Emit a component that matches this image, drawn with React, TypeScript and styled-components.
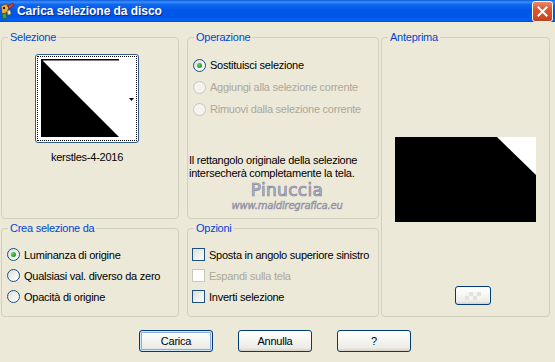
import React from 'react';
import styled, { createGlobalStyle } from 'styled-components';

const GlobalStyle = createGlobalStyle`
  html, body {
    margin: 0;
    padding: 0;
    background: #ECE9D8;
  }
  body {
    font-family: 'Liberation Sans', Tahoma, Arial, sans-serif;
    font-size: 11px;
    letter-spacing: -0.25px;
    color: #000;
  }
`;

const Window = styled.div`
  width: 555px;
  height: 362px;
  display: flex;
  flex-direction: column;
  background: #ECE9D8;
  overflow: hidden;
`;

const TitleBar = styled.div`
  height: 22px;
  display: flex;
  align-items: center;
  padding: 0 2px 0 0;
  background: linear-gradient(180deg, #0A5CDF 0%, #3D8FF7 9%, #1068F0 20%, #0058E8 45%, #0056E6 75%, #0062F6 90%, #004CD8 100%);
`;

const TitleText = styled.span`
  flex: 1;
  margin-left: 1px;
  color: #fff;
  font-weight: bold;
  font-size: 12px;
  letter-spacing: -0.05px;
  text-shadow: 1px 1px 0 #0A2A8A;
`;

const CloseButton = styled.div`
  width: 19px;
  height: 19px;
  border: 1px solid #fff;
  border-radius: 3px;
  display: flex;
  align-items: center;
  justify-content: center;
  background: linear-gradient(180deg, #E98A6C 0%, #E0582E 35%, #D14A22 80%, #C23E1A 100%);
`;

const Body = styled.div`
  flex: 1;
  padding: 9px 0 0 1px;
  display: flex;
  flex-direction: column;
`;

const Panels = styled.div`
  display: grid;
  grid-template-columns: 178px 8px 192px 2px 169px;
  grid-template-rows: 188px 95px;
  row-gap: 3px;
`;

const Group = styled.fieldset<{ $col: number; $row: string }>`
  grid-column: ${p => p.$col};
  grid-row: ${p => p.$row};
  margin: 0;
  padding: 0;
  min-width: 0;
  border: 1px solid #D0D0BF;
  border-radius: 4px;
  display: flex;
  flex-direction: column;
`;

const Legend = styled.legend`
  margin-left: 6px;
  padding: 0 2px;
  line-height: 13px;
  color: #0046D5;
`;

const SelContent = styled.div`
  display: flex;
  flex-direction: column;
  align-items: center;
  padding: 10px 6px 0 0;
`;

const ThumbBox = styled.div`
  width: 100px;
  height: 85px;
  border: 1px solid #2F5E8E;
  border-radius: 3px;
  background: #fff;
  padding: 1px;
  box-sizing: content-box;
  display: flex;
`;

const FocusRect = styled.div`
  flex: 1;
  border: 1px dotted #000;
  padding: 2px 0 1px 3px;
  display: flex;
`;

const ThumbSide = styled.div`
  flex: 1;
  display: flex;
  align-items: center;
  justify-content: center;
`;

const ThumbName = styled.div`
  margin-top: 8px;
  line-height: 13px;
`;

const OpContent = styled.div`
  display: flex;
  flex-direction: column;
  padding-top: 10px;
`;

const OptionList = styled.div<{ $pad: number }>`
  display: flex;
  flex-direction: column;
  padding-left: ${p => p.$pad}px;
`;

const OptionRow = styled.label<{ $h: number; $disabled?: boolean }>`
  height: ${p => p.$h}px;
  display: flex;
  align-items: center;
  gap: 4px;
  color: ${p => (p.$disabled ? '#ACA899' : '#000')};
  white-space: nowrap;
`;

const RadioCircle = styled.span<{ $checked?: boolean; $disabled?: boolean }>`
  width: 11px;
  height: 11px;
  border-radius: 50%;
  border: 1px solid ${p => (p.$disabled ? '#CAC8BB' : '#1C5180')};
  background: ${p =>
    p.$disabled
      ? '#F4F3EE'
      : 'linear-gradient(135deg, #DCDCD7 0%, #F2F2EF 55%, #FFFFFF 100%)'};
  display: flex;
  align-items: center;
  justify-content: center;
  flex: none;
  &::after {
    content: '';
    display: ${p => (p.$checked ? 'block' : 'none')};
    width: 5px;
    height: 5px;
    border-radius: 50%;
    background: radial-gradient(circle at 35% 35%, #6BD36B 0%, #21A121 60%, #1A8C1A 100%);
  }
`;

const CheckBox = styled.span<{ $disabled?: boolean }>`
  width: 11px;
  height: 11px;
  border: 1px solid ${p => (p.$disabled ? '#CAC8BB' : '#1C5180')};
  background: ${p =>
    p.$disabled ? '#FFFFFF' : 'linear-gradient(135deg, #DCDCD7 0%, #F0F0EC 55%, #FFFFFF 100%)'};
  flex: none;
`;

const Description = styled.div`
  margin-top: 34px;
  padding-left: 1px;
  line-height: 13px;
`;

const Watermark = styled.div`
  display: flex;
  flex-direction: column;
  align-items: center;
  padding-left: 8px;
  margin-top: 1px;
`;

const WmName = styled.span`
  font-family: 'DejaVu Sans', Verdana, sans-serif;
  font-size: 17px;
  line-height: 19px;
  letter-spacing: 0.3px;
  color: #B9BACB;
  -webkit-text-stroke: 0.7px #85879D;
`;

const WmUrl = styled.span`
  font-family: 'DejaVu Sans', Verdana, sans-serif;
  font-size: 10px;
  font-style: italic;
  line-height: 12px;
  letter-spacing: -0.2px;
  color: #9FA0B2;
  -webkit-text-stroke: 0.4px #8A8CA0;
`;

const CreaContent = styled.div`
  padding-top: 9px;
  display: flex;
  flex-direction: column;
`;

const PreviewContent = styled.div`
  display: flex;
  flex-direction: column;
  align-items: center;
  padding-top: 93px;
`;

const SmallButton = styled.div`
  margin-top: 64px;
  margin-left: 14px;
  width: 34px;
  height: 17px;
  border: 1px solid #003C74;
  border-radius: 3px;
  background: linear-gradient(180deg, #FFFFFF 0%, #F6F6F2 50%, #ECEBE6 85%, #D6D0C5 100%);
  display: flex;
  align-items: center;
  justify-content: center;
`;

const ButtonRow = styled.div`
  display: flex;
  gap: 25px;
  padding-left: 138px;
  margin-top: 13px;
`;

const Button = styled.div<{ $default?: boolean }>`
  width: 72px;
  height: 20px;
  border: 1px solid #003C74;
  border-radius: 3px;
  background: linear-gradient(180deg, #FFFFFF 0%, #F5F5F1 45%, #ECEBE6 85%, #D6D0C5 100%);
  box-shadow: ${p => (p.$default ? 'inset 0 0 0 1px #CEE7FF, inset 0 0 0 2px #8CAAE6' : 'none')};
  display: flex;
  align-items: center;
  justify-content: center;
  line-height: 13px;
`;

function AppIcon() {
  return (
    <svg width="16" height="18" viewBox="0 0 16 18">
      <path d="M1 4 L6 2 L9 6 L6 11 L2 12 Z" fill="#F2B23A" stroke="#7A3A10" strokeWidth="0.8" />
      <circle cx="4" cy="6" r="1.2" fill="#1A1A1A" />
      <path d="M2 12 L6 11 L7 16 L3 17 Z" fill="#3FA047" stroke="#1E5A22" strokeWidth="0.6" />
      <path d="M8 4 L13 1 L14 3 L9 7 Z" fill="#D8442C" stroke="#6A1A0A" strokeWidth="0.6" />
      <path d="M7 9 L10 8 L11 12 L8 13 Z" fill="#E9E3C8" stroke="#7A6A40" strokeWidth="0.5" />
    </svg>
  );
}

function Radio({ label, checked, disabled, h }: { label: string; checked?: boolean; disabled?: boolean; h: number }) {
  return (
    <OptionRow $h={h} $disabled={disabled}>
      <RadioCircle $checked={checked} $disabled={disabled} />
      {label}
    </OptionRow>
  );
}

function Check({ label, disabled }: { label: string; disabled?: boolean }) {
  return (
    <OptionRow $h={21} $disabled={disabled}>
      <CheckBox $disabled={disabled} />
      {label}
    </OptionRow>
  );
}

export default function App() {
  return (
    <Window>
      <GlobalStyle />
      <TitleBar>
        <AppIcon />
        <TitleText>Carica selezione da disco</TitleText>
        <CloseButton>
          <svg width="11" height="11" viewBox="0 0 11 11">
            <path d="M1.5 1.5 L9.5 9.5 M9.5 1.5 L1.5 9.5" stroke="#fff" strokeWidth="2" strokeLinecap="square" />
          </svg>
        </CloseButton>
      </TitleBar>
      <Body>
        <Panels>
          <Group $col={1} $row="1">
            <Legend>Selezione</Legend>
            <SelContent>
              <ThumbBox>
                <FocusRect>
                  <svg width="86" height="78" viewBox="0 0 86 78">
                    <rect width="86" height="78" fill="#fff" />
                    <rect x="0" y="0" width="78" height="1.5" fill="#000" />
                    <polygon points="0,0 0,78 78,78" fill="#000" />
                    <rect x="0" y="0" width="2" height="78" fill="#000" />
                  </svg>
                  <ThumbSide>
                    <svg width="5" height="3" viewBox="0 0 5 3">
                      <polygon points="0,0 5,0 2.5,3" fill="#000" />
                    </svg>
                  </ThumbSide>
                </FocusRect>
              </ThumbBox>
              <ThumbName>kerstles-4-2016</ThumbName>
            </SelContent>
          </Group>

          <Group $col={3} $row="1">
            <Legend>Operazione</Legend>
            <OpContent>
              <OptionList $pad={5}>
                <Radio h={22} label="Sostituisci selezione" checked />
                <Radio h={22} label="Aggiungi alla selezione corrente" disabled />
                <Radio h={22} label="Rimuovi dalla selezione corrente" disabled />
              </OptionList>
              <Description>
                Il rettangolo originale della selezione
                <br />
                intersecherà completamente la tela.
              </Description>
              <Watermark>
                <WmName>Pinuccia</WmName>
                <WmUrl>www.maidiregrafica.eu</WmUrl>
              </Watermark>
            </OpContent>
          </Group>

          <Group $col={5} $row="1 / span 2">
            <Legend>Anteprima</Legend>
            <PreviewContent>
              <svg width="141" height="85" viewBox="0 0 141 85">
                <rect width="141" height="85" fill="#000" />
                <polygon points="102,0 141,0 141,38" fill="#fff" />
              </svg>
              <SmallButton>
                <svg width="16" height="8" viewBox="0 0 16 8">
                  <rect x="0" y="0" width="4" height="4" fill="#F4F4F4" />
                  <rect x="8" y="0" width="4" height="4" fill="#F4F4F4" />
                  <rect x="4" y="4" width="4" height="4" fill="#F4F4F4" />
                  <rect x="12" y="4" width="4" height="4" fill="#F4F4F4" />
                  <rect x="4" y="0" width="4" height="4" fill="#E2E2DE" />
                  <rect x="0" y="4" width="4" height="4" fill="#E2E2DE" />
                  <rect x="12" y="0" width="4" height="4" fill="#E2E2DE" />
                  <rect x="8" y="4" width="4" height="4" fill="#E2E2DE" />
                </svg>
              </SmallButton>
            </PreviewContent>
          </Group>

          <Group $col={1} $row="2">
            <Legend>Crea selezione da</Legend>
            <CreaContent>
              <OptionList $pad={5}>
                <Radio h={21} label="Luminanza di origine" checked />
                <Radio h={21} label="Qualsiasi val. diverso da zero" />
                <Radio h={21} label="Opacità di origine" />
              </OptionList>
            </CreaContent>
          </Group>

          <Group $col={3} $row="2">
            <Legend>Opzioni</Legend>
            <CreaContent>
              <OptionList $pad={4}>
                <Check label="Sposta in angolo superiore sinistro" />
                <Check label="Espandi sulla tela" disabled />
                <Check label="Inverti selezione" />
              </OptionList>
            </CreaContent>
          </Group>
        </Panels>

        <ButtonRow>
          <Button $default>Carica</Button>
          <Button>Annulla</Button>
          <Button>?</Button>
        </ButtonRow>
      </Body>
    </Window>
  );
}
